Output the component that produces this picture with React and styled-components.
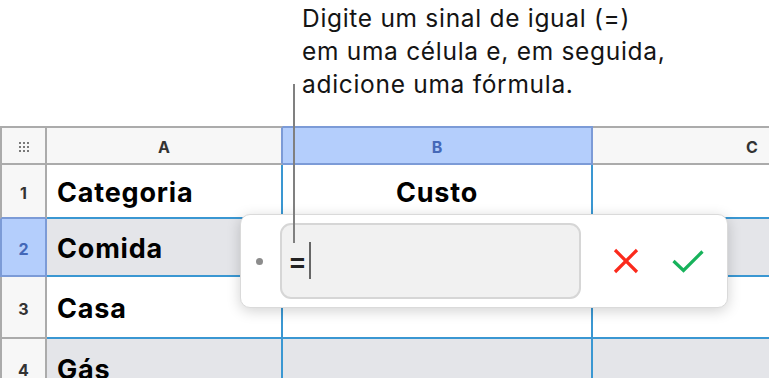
import React from "react";
import styled, { createGlobalStyle } from "styled-components";

const GRAY = "#ababab";
const BLUE = "#3a97d2";
const SEL_BORDER = "#7c9bd7";
const SEL_BG = "#b4cefc";
const SEL_TEXT = "#4468b8";

const GlobalStyle = createGlobalStyle`
  html, body { margin: 0; padding: 0; background: #fff; }
  body { font-family: Inter, "Liberation Sans", sans-serif; }
`;

const Page = styled.div`
  position: relative;
  width: 769px;
  height: 378px;
  overflow: hidden;
  background: #fff;
`;

const Caption = styled.div`
  box-sizing: border-box;
  height: 126px;
  padding: 2px 0 0 302px;
  font-family: Inter, "Liberation Sans", sans-serif;
  font-size: 24.5px;
  letter-spacing: 0.7px;
  line-height: 33px;
  color: #141414;
  white-space: nowrap;
`;

const Sheet = styled.div`
  display: grid;
  grid-template-columns: 47px 236px 310px 320px;
  grid-template-rows: 39px 54px 58px 62px 60px;
`;

const ColHead = styled.div`
  box-sizing: border-box;
  display: flex;
  align-items: center;
  justify-content: center;
  padding-top: 3px;
  background: ${(p) => (p.$sel ? SEL_BG : "#f7f7f7")};
  border-top: 2px solid ${(p) => (p.$sel ? SEL_BORDER : GRAY)};
  border-bottom: 2px solid ${(p) => (p.$sel ? SEL_BORDER : GRAY)};
  border-right: 2px solid ${(p) => (p.$sel || p.$beforeSel ? SEL_BORDER : GRAY)};
  border-left: ${(p) => (p.$first ? `2px solid ${GRAY}` : "none")};
  color: ${(p) => (p.$sel ? SEL_TEXT : "#333")};
  font: 700 16px Inter, "Liberation Sans", sans-serif;
`;

const RowHead = styled.div`
  box-sizing: border-box;
  display: flex;
  align-items: center;
  justify-content: center;
  padding-top: 4px;
  background: ${(p) => (p.$sel ? SEL_BG : "#f7f7f7")};
  border-left: 2px solid ${(p) => (p.$sel ? SEL_BORDER : GRAY)};
  border-right: 2px solid ${(p) => (p.$sel ? SEL_BORDER : GRAY)};
  border-bottom: 2px solid ${(p) => (p.$sel || p.$beforeSel ? SEL_BORDER : GRAY)};
  color: ${(p) => (p.$sel ? SEL_TEXT : "#333")};
  font: 700 16px Inter, "Liberation Sans", sans-serif;
`;

const Cell = styled.div`
  box-sizing: border-box;
  display: flex;
  align-items: center;
  justify-content: ${(p) => (p.$center ? "center" : "flex-start")};
  padding-left: ${(p) => (p.$center ? "0" : "10px")};
  padding-top: 3px;
  background: ${(p) => (p.$band ? "#e4e5e9" : "#fff")};
  border-right: 2px solid ${BLUE};
  border-bottom: 2px solid ${BLUE};
  color: #000;
  font: 700 27px Inter, "Liberation Sans", sans-serif;
  letter-spacing: 0.8px;
`;

const Popup = styled.div`
  position: absolute;
  left: 240px;
  top: 214px;
  width: 488px;
  height: 94px;
  box-sizing: border-box;
  display: flex;
  align-items: center;
  padding: 0 26px 0 15px;
  background: #fff;
  border: 1px solid #dadada;
  border-radius: 10px;
  box-shadow: 0 3px 14px rgba(0, 0, 0, 0.18);
`;

const Dot = styled.span`
  width: 7px;
  height: 7px;
  border-radius: 50%;
  background: #8c8c8c;
  flex: none;
`;

const Field = styled.div`
  box-sizing: border-box;
  margin-left: 17px;
  width: 301px;
  height: 76px;
  flex: none;
  display: flex;
  align-items: center;
  padding-left: 6px;
  background: #f1f1f1;
  border: 2px solid #d6d6d6;
  border-radius: 11px;
  font: 600 28px Inter, "Liberation Sans", sans-serif;
  color: #222;
`;

const Caret = styled.span`
  width: 2px;
  height: 37px;
  margin-left: 2px;
  margin-top: -2px;
  background: #666;
`;

const IconButton = styled.span`
  display: flex;
  flex: none;
  margin-left: ${(p) => p.$gap}px;
`;

const Leader = styled.div`
  position: absolute;
  left: 293px;
  top: 84px;
  width: 2px;
  height: 159px;
  background: #808080;
`;

const rows = [
  { n: 1, a: "Categoria", b: "Custo", band: false },
  { n: 2, a: "Comida", b: "", band: true, sel: true },
  { n: 3, a: "Casa", b: "", band: false },
  { n: 4, a: "Gás", b: "", band: true },
];

export default function App() {
  return (
    <>
      <GlobalStyle />
      <Page>
        <Caption>
          Digite um sinal de igual (=)
          <br />
          em uma célula e, em seguida,
          <br />
          adicione uma fórmula.
        </Caption>
        <Sheet>
          <ColHead $first>
            <svg width="12" height="12" viewBox="0 0 12 12">
              {[1, 5, 9].map((y) =>
                [1, 5, 9].map((x) => (
                  <rect key={`${x}-${y}`} x={x} y={y} width="2" height="2" fill="#7a7a7a" />
                ))
              )}
            </svg>
          </ColHead>
          <ColHead $beforeSel>A</ColHead>
          <ColHead $sel>B</ColHead>
          <ColHead>C</ColHead>
          {rows.map((r, i) => (
            <React.Fragment key={r.n}>
              <RowHead $sel={r.sel} $beforeSel={rows[i + 1] && rows[i + 1].sel}>
                {r.n}
              </RowHead>
              <Cell $band={r.band}>{r.a}</Cell>
              <Cell $band={r.band} $center>
                {r.b}
              </Cell>
              <Cell $band={r.band} />
            </React.Fragment>
          ))}
        </Sheet>
        <Popup>
          <Dot />
          <Field>
            =<Caret />
          </Field>
          <IconButton $gap={32}>
            <svg width="26" height="26" viewBox="0 0 26 26">
              <path d="M2 2 L24 24 M24 2 L2 24" stroke="#fb2a1c" strokeWidth="3.2" fill="none" />
            </svg>
          </IconButton>
          <IconButton $gap={33}>
            <svg width="32" height="24" viewBox="0 0 32 24">
              <path d="M1.5 12 L11.5 21.5 L30.5 2.5" stroke="#17b25b" strokeWidth="3.2" fill="none" />
            </svg>
          </IconButton>
        </Popup>
        <Leader />
      </Page>
    </>
  );
}
